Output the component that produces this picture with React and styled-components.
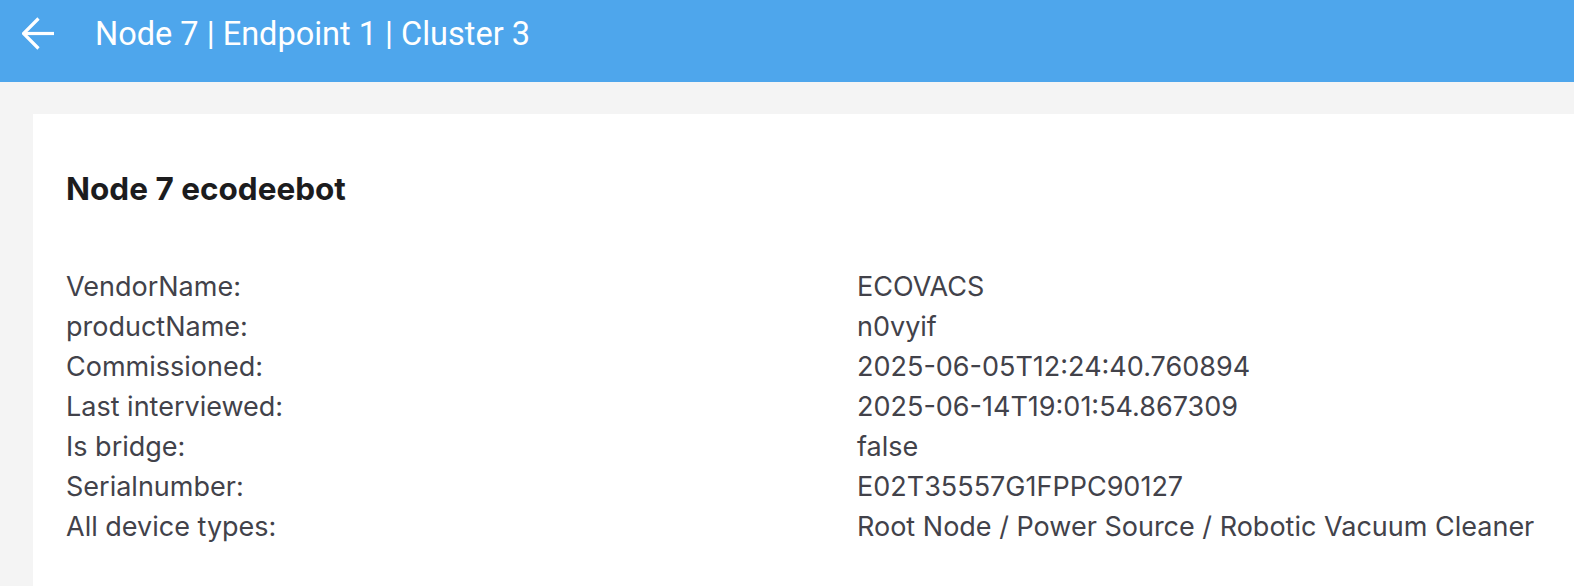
import React from 'react';
import styled, { createGlobalStyle } from 'styled-components';

const GlobalStyle = createGlobalStyle`
  html, body {
    margin: 0;
    padding: 0;
    background: #f4f4f4;
    overflow: hidden;
  }
`

const Page = styled.div`
  width: 100%;
  min-height: 586px;
  background: #f4f4f4;
  overflow: hidden;
`

const Header = styled.header`
  height: 82px;
  background: #4ea6ec;
  color: #ffffff;
  display: flex;
  align-items: flex-start;
`

const Toolbar = styled.div`
  height: 68px;
  display: flex;
  align-items: center;
  padding-left: 20px;
`

const BackButton = styled.button`
  width: 38px;
  height: 38px;
  padding: 0;
  border: none;
  background: transparent;
  display: flex;
  align-items: center;
  justify-content: center;
  cursor: pointer;
  margin-right: 37px;
`

const Title = styled.h1`
  margin: 0;
  font-family: Roboto, "Liberation Sans", sans-serif;
  font-size: 32.5px;
  font-weight: 400;
  color: #ffffff;
`

const Card = styled.section`
  margin: 32px 0 0 33px;
  width: 1700px;
  min-height: 600px;
  background: #ffffff;
  padding: 55px 33px 40px;
  box-sizing: border-box;
  font-family: Inter, "Noto Sans", sans-serif;
`

const Heading = styled.h2`
  margin: 0 0 59px;
  font-size: 31.5px;
  font-weight: 700;
  color: #1c1c1e;
`

const InfoGrid = styled.dl`
  margin: 0;
  display: grid;
  grid-template-columns: 789px 1fr;
  font-size: 27px;
  line-height: 40px;
  color: #42424a;
`

const Label = styled.dt`
  margin: 0;
`

const Value = styled.dd`
  margin: 0 0 0 2px;
`

const info = [
  ['VendorName:', 'ECOVACS'],
  ['productName:', 'n0vyif'],
  ['Commissioned:', '2025-06-05T12:24:40.760894'],
  ['Last interviewed:', '2025-06-14T19:01:54.867309'],
  ['Is bridge:', 'false'],
  ['Serialnumber:', 'E02T35557G1FPPC90127'],
  ['All device types:', 'Root Node / Power Source / Robotic Vacuum Cleaner'],
]

const App = () => {
  return (
    <Page>
      <GlobalStyle />
      <Header>
        <Toolbar>
          <BackButton aria-label="Back">
            <svg width="34" height="34" viewBox="0 0 34 34" fill="none" stroke="#fff" strokeWidth="3.2">
              <path d="M1.5 16.5h30.5" />
              <path d="M16.5 1.5l-15 15 15 15" />
            </svg>
          </BackButton>
          <Title>Node 7 | Endpoint 1 | Cluster 3</Title>
        </Toolbar>
      </Header>
      <Card>
        <Heading>Node 7 ecodeebot</Heading>
        <InfoGrid>
          {info.map(([label, value]) => (
            <React.Fragment key={label}>
              <Label>{label}</Label>
              <Value>{value}</Value>
            </React.Fragment>
          ))}
        </InfoGrid>
      </Card>
    </Page>
  )
}

export default App;
